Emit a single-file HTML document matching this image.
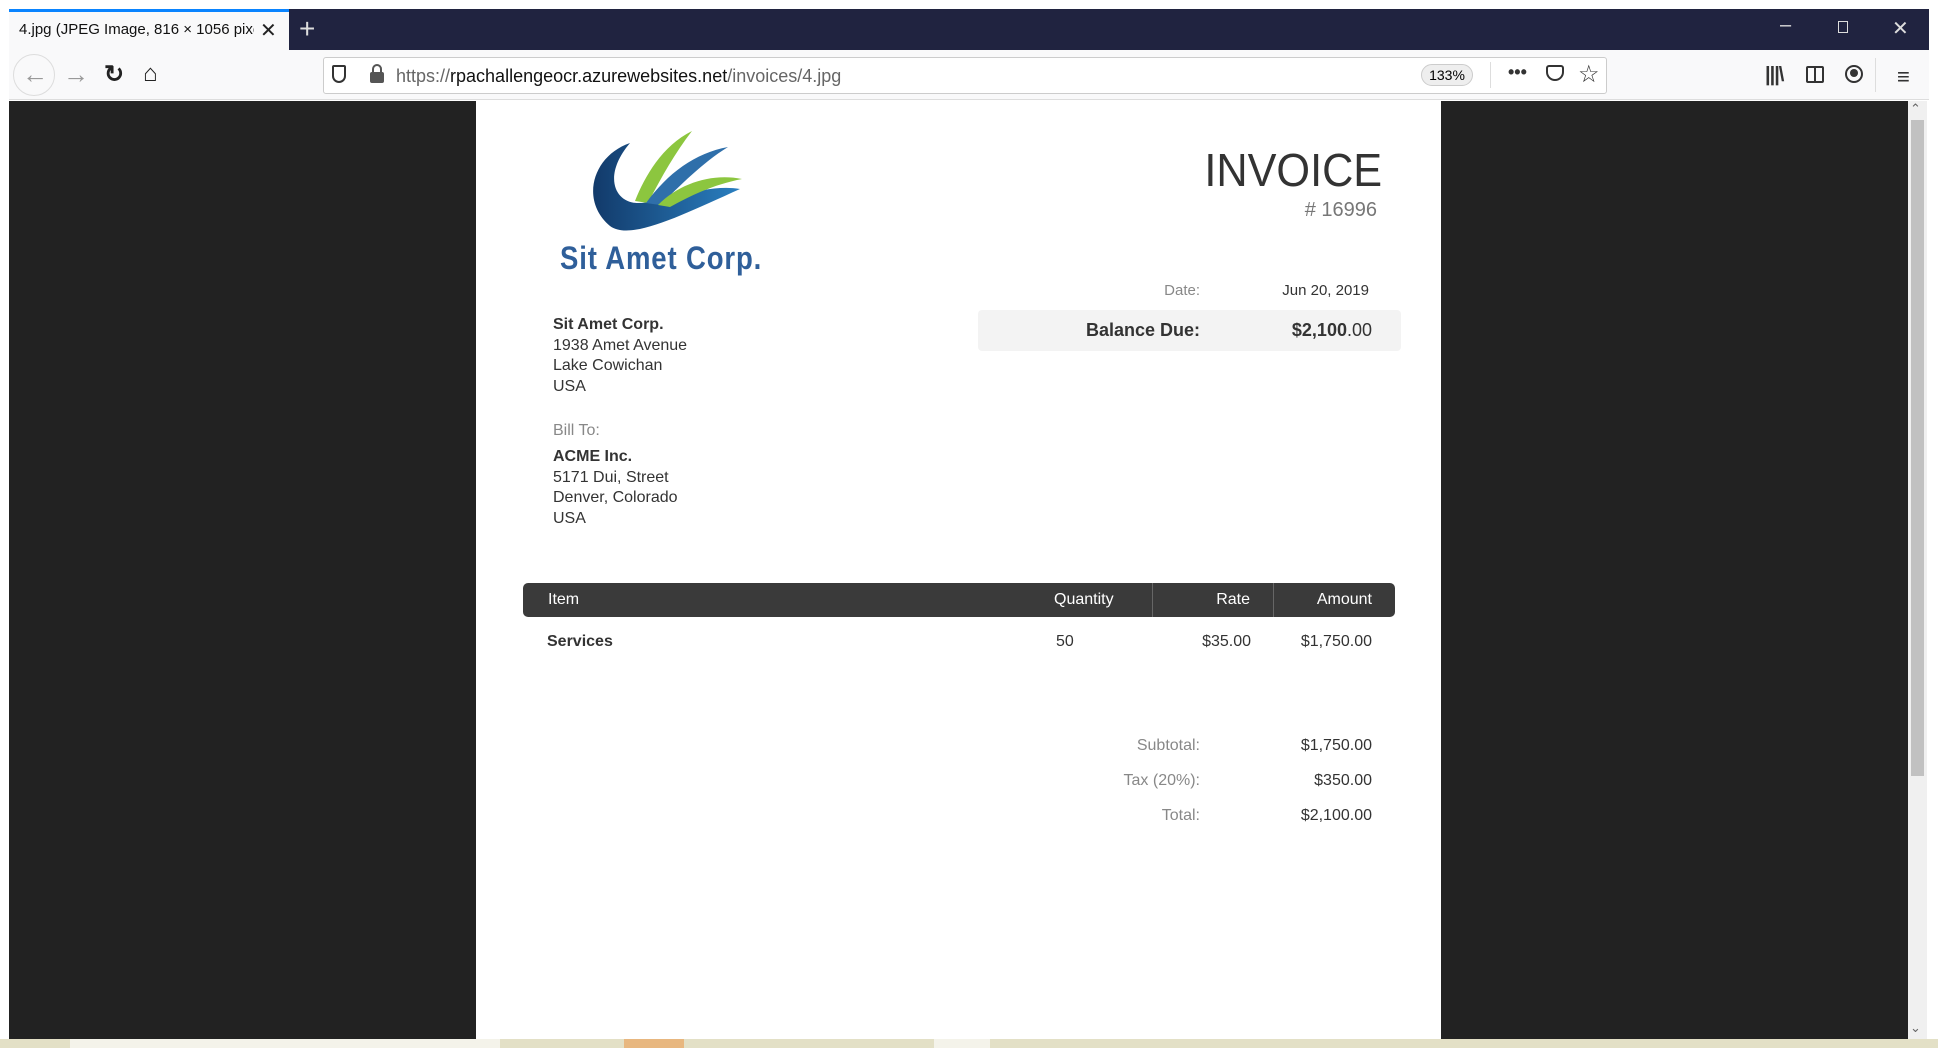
<!DOCTYPE html>
<html><head><meta charset="utf-8"><style>
*{margin:0;padding:0;box-sizing:border-box}
body{width:1938px;height:1048px;position:relative;overflow:hidden;background:#fff;font-family:"Liberation Sans",sans-serif}
.a{position:absolute}
.r{text-align:right}
.doc{font-family:"Liberation Sans",sans-serif;color:#333}
</style></head><body>
<!-- tab bar -->
<div class="a" style="left:9px;top:9px;width:1920px;height:41px;background:#202340"></div>
<div class="a" style="left:9px;top:9px;width:280px;height:41px;background:#f9f9fa;border-top:3px solid #0a84ff"></div>
<div class="a" style="left:19px;top:21px;font-size:15px;color:#111;width:235px;overflow:hidden;white-space:nowrap">4.jpg (JPEG Image, 816 × 1056 pixels)</div>
<div class="a" style="left:260px;top:18px;font-size:20px;color:#222">✕</div>
<div class="a" style="left:299px;top:13px;font-size:28px;color:#ddd;font-weight:300">+</div>
<div class="a" style="left:1780px;top:14px;font-size:20px;color:#ddd">–</div>
<div class="a" style="left:1838px;top:21px;width:10px;height:12px;border:1.5px solid #ddd"></div>
<div class="a" style="left:1892px;top:16px;font-size:20px;color:#ddd">✕</div>
<!-- toolbar -->
<div class="a" style="left:9px;top:50px;width:1920px;height:50px;background:#f9f9fa;border-bottom:1px solid #ddd"></div>
<div class="a" style="left:13px;top:54px;width:42px;height:42px;border-radius:50%;border:1px solid #ddd"></div>
<div class="a" style="left:22px;top:59px;font-size:26px;color:#999">←</div>
<div class="a" style="left:63px;top:59px;font-size:26px;color:#999">→</div>
<div class="a" style="left:104px;top:60px;font-size:24px;color:#222;font-weight:bold">↻</div>
<div class="a" style="left:143px;top:60px;font-size:24px;color:#222">⌂</div>
<div class="a" style="left:323px;top:57px;width:1284px;height:37px;background:#fff;border:1px solid #ccc;border-radius:3px"></div>
<div class="a" style="left:332px;top:65px;width:14px;height:18px;border:2px solid #333;border-radius:2px 2px 7px 7px"></div>
<div class="a" style="left:370px;top:72px;width:14px;height:11px;background:#555;border-radius:2px"></div>
<div class="a" style="left:372px;top:64px;width:10px;height:10px;border:2px solid #555;border-radius:5px 5px 0 0"></div>
<div class="a" style="left:396px;top:66px;font-size:18px;color:#666">https://<span style="color:#111">rpachallengeocr.azurewebsites.net</span>/invoices/4.jpg</div>
<div class="a" style="left:1421px;top:64px;width:52px;height:22px;border-radius:11px;background:#eee;border:1px solid #ccc;font-size:14px;text-align:center;line-height:20px">133%</div>
<div class="a" style="left:1490px;top:62px;width:1px;height:26px;background:#ddd"></div>
<div class="a" style="left:1508px;top:62px;font-size:18px;color:#333;font-weight:bold">•••</div>
<div class="a" style="left:1546px;top:65px;width:18px;height:16px;border:2px solid #333;border-radius:3px 3px 9px 9px"></div>
<div class="a" style="left:1578px;top:60px;font-size:24px;color:#333">☆</div>
<div class="a" style="left:1765px;top:64px;font-size:20px;color:#333;font-weight:bold;letter-spacing:-1px">|||\</div>
<div class="a" style="left:1806px;top:66px;width:18px;height:17px;border:2px solid #333;border-radius:2px"></div>
<div class="a" style="left:1814px;top:66px;width:2px;height:17px;background:#333"></div>
<div class="a" style="left:1845px;top:65px;width:18px;height:18px;border-radius:50%;border:2px solid #333"></div>
<div class="a" style="left:1850px;top:69px;width:8px;height:8px;border-radius:50%;background:#333"></div>
<div class="a" style="left:1875px;top:58px;width:1px;height:34px;background:#ddd"></div>
<div class="a" style="left:1897px;top:64px;font-size:22px;color:#333">≡</div>
<!-- content -->
<div class="a" style="left:9px;top:101px;width:1899px;height:938px;background:#222"></div>
<div class="a" style="left:1908px;top:101px;width:19px;height:938px;background:#f0f0f0"></div>
<div class="a" style="left:1911px;top:120px;width:13px;height:656px;background:#c1c1c1"></div>
<div class="a" style="left:1910px;top:101px;font-size:13px;color:#666">⌃</div>
<div class="a" style="left:1910px;top:1020px;font-size:13px;color:#666">⌄</div>
<div class="a" style="left:0;top:1039px;width:1938px;height:9px;background:#e3e0c6"></div>
<div class="a" style="left:624px;top:1039px;width:60px;height:9px;background:#e8b77f"></div>
<div class="a" style="left:70px;top:1039px;width:430px;height:9px;background:#f4f3ea"></div>
<div class="a" style="left:934px;top:1039px;width:56px;height:9px;background:#f4f3ea"></div>
<!-- invoice -->
<div class="a doc" style="left:476px;top:101px;width:965px;height:938px;background:#fff">
<svg class="a" style="left:104px;top:30px" width="170" height="110" viewBox="0 0 170 110">
<defs><linearGradient id="g1" x1="0" x2="1"><stop offset="0" stop-color="#123a6a"/><stop offset="1" stop-color="#2a7fc0"/></linearGradient></defs>
<path d="M50 12 C12 25 0 70 30 95 C50 110 100 85 160 58 C125 52 85 72 58 72 C35 72 22 45 50 12Z" fill="url(#g1)"/>
<path d="M55 70 C65 45 82 15 112 0 C95 22 82 45 68 72Z" fill="#8cc63f"/>
<path d="M66 72 C88 42 115 22 148 16 C122 32 100 55 80 74Z" fill="#2f6faa"/>
<path d="M78 74 C100 52 132 42 162 48 C132 54 110 65 90 76Z" fill="#8cc63f"/>
</svg>
<div class="a" style="left:84px;top:139px;font-size:32px;font-weight:bold;color:#2f5f9a;transform:scaleX(.86);transform-origin:left;white-space:nowrap;letter-spacing:1px">Sit Amet Corp.</div>
<div class="a" style="left:77px;top:214px;font-size:16px;line-height:20.7px;color:#333"><b>Sit Amet Corp.</b><br>1938 Amet Avenue<br>Lake Cowichan<br>USA</div>
<div class="a" style="left:77px;top:321px;font-size:16px;color:#888">Bill To:</div>
<div class="a" style="left:77px;top:346px;font-size:16px;line-height:20.7px;color:#333"><b>ACME Inc.</b><br>5171 Dui, Street<br>Denver, Colorado<br>USA</div>
<div class="a r" style="right:59px;top:42px;font-size:46px;color:#333;transform:scaleX(.94);transform-origin:right">INVOICE</div>
<div class="a r" style="right:64px;top:98px;font-size:20px;color:#777"># 16996</div>
<div class="a r" style="left:600px;width:124px;top:181px;font-size:15px;color:#888">Date:</div>
<div class="a r" style="left:750px;width:143px;top:181px;font-size:15px;color:#333">Jun 20, 2019</div>
<div class="a" style="left:502px;top:209px;width:423px;height:41px;background:#f3f3f3;border-radius:4px"></div>
<div class="a r" style="left:550px;width:174px;top:219px;font-size:18px;font-weight:bold;color:#333">Balance Due:</div>
<div class="a r" style="left:750px;width:146px;top:219px;font-size:18px;color:#333"><b>$2,100</b>.00</div>
<div class="a" style="left:47px;top:482px;width:872px;height:34px;background:#3a3a3a;border-radius:5px"></div>
<div class="a" style="left:676px;top:482px;width:1px;height:34px;background:#666"></div>
<div class="a" style="left:797px;top:482px;width:1px;height:34px;background:#666"></div>
<div class="a" style="left:72px;top:490px;font-size:16px;color:#fff">Item</div>
<div class="a" style="left:578px;top:490px;font-size:16px;color:#fff">Quantity</div>
<div class="a r" style="left:700px;width:74px;top:490px;font-size:16px;color:#fff">Rate</div>
<div class="a r" style="left:800px;width:96px;top:490px;font-size:16px;color:#fff">Amount</div>
<div class="a" style="left:71px;top:532px;font-size:16px;font-weight:bold">Services</div>
<div class="a" style="left:580px;top:532px;font-size:16px">50</div>
<div class="a r" style="left:680px;width:95px;top:532px;font-size:16px">$35.00</div>
<div class="a r" style="left:780px;width:116px;top:532px;font-size:16px">$1,750.00</div>
<div class="a r" style="left:580px;width:144px;top:636px;font-size:16px;color:#888">Subtotal:</div>
<div class="a r" style="left:780px;width:116px;top:636px;font-size:16px">$1,750.00</div>
<div class="a r" style="left:580px;width:144px;top:671px;font-size:16px;color:#888">Tax (20%):</div>
<div class="a r" style="left:780px;width:116px;top:671px;font-size:16px">$350.00</div>
<div class="a r" style="left:580px;width:144px;top:706px;font-size:16px;color:#888">Total:</div>
<div class="a r" style="left:780px;width:116px;top:706px;font-size:16px">$2,100.00</div>
</div>
</body></html>
